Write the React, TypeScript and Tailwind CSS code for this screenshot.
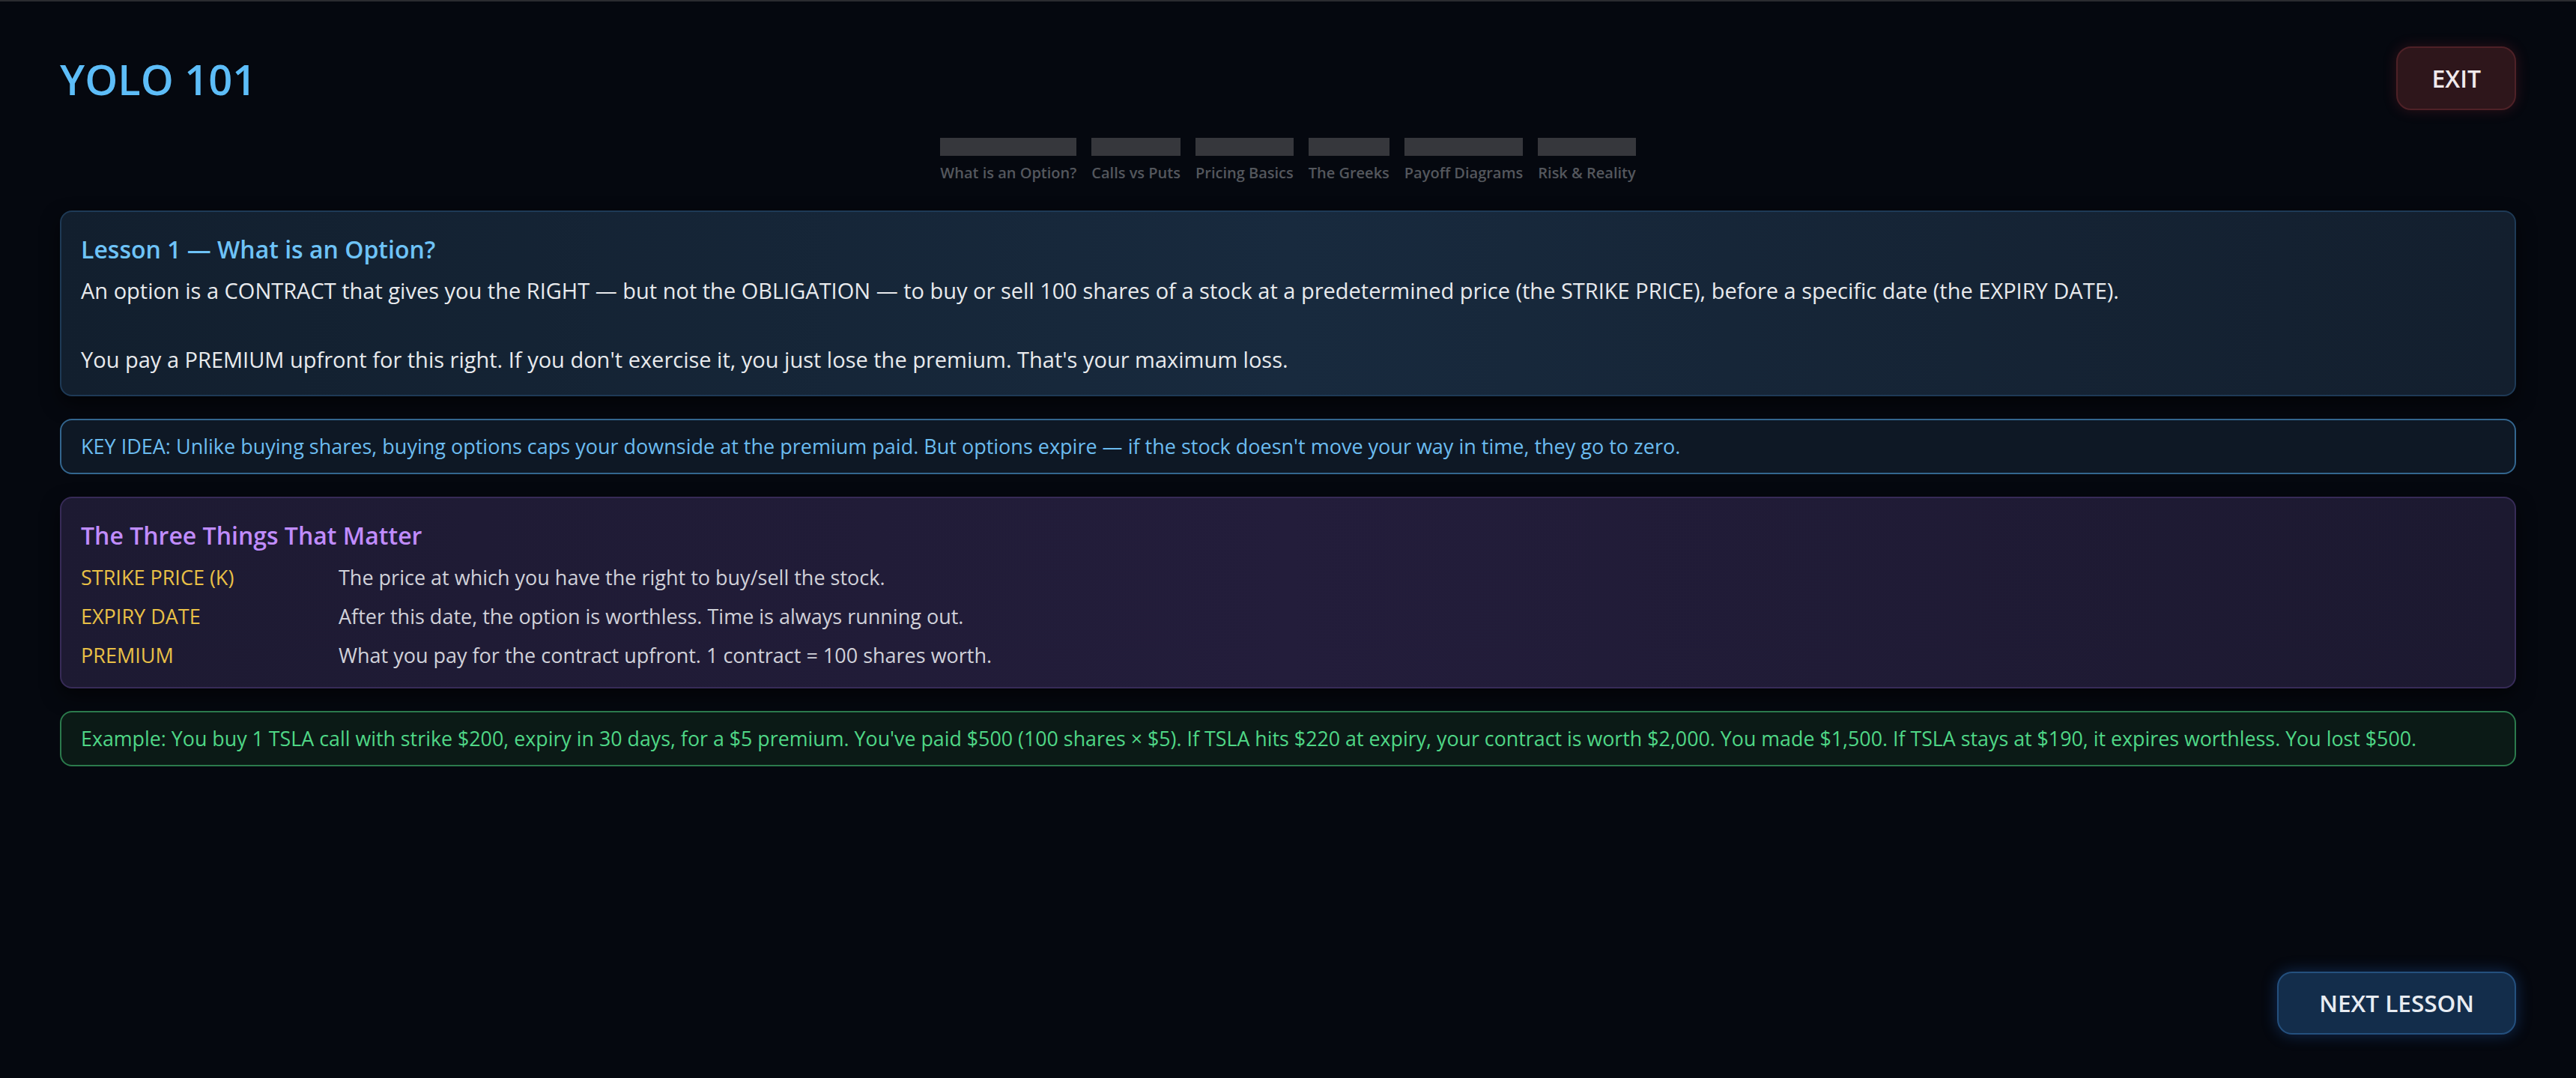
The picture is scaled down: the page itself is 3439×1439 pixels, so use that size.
import React from "react";

const steps = [
  "What is an Option?",
  "Calls vs Puts",
  "Pricing Basics",
  "The Greeks",
  "Payoff Diagrams",
  "Risk & Reality",
];

const terms = [
  ["STRIKE PRICE (K)", "The price at which you have the right to buy/sell the stock."],
  ["EXPIRY DATE", "After this date, the option is worthless. Time is always running out."],
  ["PREMIUM", "What you pay for the contract upfront. 1 contract = 100 shares worth."],
];

function Progress() {
  return (
    <div className="mt-[37px] flex justify-center gap-[20px]">
      {steps.map((s) => (
        <div key={s} className="flex flex-col">
          <div className="h-[24px] bg-[#36373c]" />
          <span className="mt-[8px] text-[20px] leading-[30px] font-semibold text-[#54575d] whitespace-nowrap">
            {s}
          </span>
        </div>
      ))}
    </div>
  );
}

export default function App() {
  return (
    <div className="min-h-screen flex flex-col bg-[#05080f] border-t-2 border-[#2b2c30] px-[80px] font-['Open_Sans',sans-serif]">
      <header className="pt-[60px] flex items-center justify-between">
        <h1 className="text-[56px] font-semibold text-[#5dbdf8]">YOLO 101</h1>
        <button className="h-[85px] px-[45px] rounded-[20px] border-2 border-[#4e2127] bg-[#2e161b] text-[32px] font-semibold text-[#f0e9eb] shadow-[0_0_18px_rgba(190,50,60,0.22)]">
          EXIT
        </button>
      </header>

      <Progress />

      <main className="mt-[35px] flex flex-col gap-[30px]">
        <section className="rounded-[16px] border-2 border-[#1e3a56] bg-gradient-to-r from-[#121f2e] via-[#182a3e] to-[#131f2e] px-[26px] pt-[24px] pb-[24px] shadow-[0_10px_24px_rgba(0,0,0,0.55)]">
          <h2 className="text-[32px] leading-[51px] font-semibold text-[#6ec3f7]">
            Lesson 1 — What is an Option?
          </h2>
          <p className="mt-[7px] text-[29px] leading-[46px] text-[#e8eaed] whitespace-pre-line">
            {"An option is a CONTRACT that gives you the RIGHT — but not the OBLIGATION — to buy or sell 100 shares of a stock at a predetermined price (the STRIKE PRICE), before a specific date (the EXPIRY DATE).\n\nYou pay a PREMIUM upfront for this right. If you don't exercise it, you just lose the premium. That's your maximum loss."}
          </p>
        </section>

        <div className="rounded-[16px] border-2 border-[#33668f] bg-[#0e1825] px-[26px] py-[15px] text-[27px] leading-[40px] text-[#6bbcf0]">
          KEY IDEA: Unlike buying shares, buying options caps your downside at the premium paid. But options expire — if the stock doesn't move your way in time, they go to zero.
        </div>

        <section className="rounded-[16px] border-2 border-[#372b57] bg-gradient-to-r from-[#1d1a32] via-[#231d3b] to-[#1c1930] px-[26px] pt-[24px] pb-[21px] shadow-[0_10px_24px_rgba(0,0,0,0.55)]">
          <h2 className="text-[32px] leading-[51px] font-semibold text-[#c08cfd]">
            The Three Things That Matter
          </h2>
          <div className="mt-[9px] flex flex-col gap-[9px]">
            {terms.map(([k, v]) => (
              <div key={k} className="flex text-[27px] leading-[43px]">
                <span className="w-[344px] shrink-0 text-[#e9c046]">{k}</span>
                <span className="text-[#d0d1d9]">{v}</span>
              </div>
            ))}
          </div>
        </section>

        <div className="rounded-[16px] border-2 border-[#2b7a4c] bg-[#0b1a16] px-[26px] py-[15px] text-[26.8px] leading-[40px] text-[#4fd786]">
          Example: You buy 1 TSLA call with strike $200, expiry in 30 days, for a $5 premium. You've paid $500 (100 shares × $5). If TSLA hits $220 at expiry, your contract is worth $2,000. You made $1,500. If TSLA stays at $190, it expires worthless. You lost $500.
        </div>
      </main>

      <footer className="mt-auto pb-[58px] flex justify-end">
        <button className="h-[84px] px-[54px] rounded-[20px] border-2 border-[#24507e] bg-[#132d4b] text-[31.5px] font-semibold text-[#e8ecf2] shadow-[0_0_20px_rgba(40,110,210,0.35)]">
          NEXT LESSON
        </button>
      </footer>
    </div>
  );
}
